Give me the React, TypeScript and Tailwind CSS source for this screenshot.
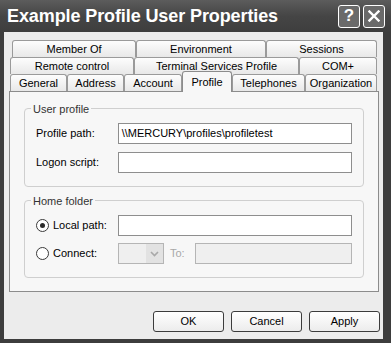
import type { ReactNode } from 'react';

const font = { fontFamily: '"Liberation Sans", Arial, sans-serif' };

function Tab({ label, width, active = false }: { label: string; width: number; active?: boolean }) {
  if (active) {
    return (
      <div
        className="relative z-10 -mt-[3px] -mb-px flex h-[21px] items-start justify-center rounded-t-[3px] border border-b-0 border-[#8c8c8c] bg-[#f7f7f7] pt-[2px] text-[11px] text-black"
        style={{ width }}
      >
        {label}
      </div>
    );
  }
  return (
    <div
      className="flex h-[17px] items-center justify-center rounded-t-[3px] border border-b-0 border-[#9a9a9a] bg-gradient-to-b from-[#fdfdfd] to-[#e8e8e8] text-[11px] text-black"
      style={{ width }}
    >
      {label}
    </div>
  );
}

function GroupBox({ title, children }: { title: string; children: ReactNode }) {
  return (
    <div className="relative rounded-[4px] border border-[#cfcfcf] px-[11px] pb-[13px] pt-[14px]">
      <span className="absolute -top-[8px] left-[6px] bg-[#f7f7f7] px-[2px] text-[11px] text-[#333]">{title}</span>
      {children}
    </div>
  );
}

function TextBox({ value = '', disabled = false, className = '' }: { value?: string; disabled?: boolean; className?: string }) {
  return (
    <div
      className={`flex h-[21px] items-center border px-[3px] text-[11px] text-black ${
        disabled ? 'border-[#b5b5b5] bg-[#efefef]' : 'border-[#8e8e8e] bg-white'
      } ${className}`}
    >
      {value}
    </div>
  );
}

function Radio({ checked = false }: { checked?: boolean }) {
  return (
    <span className="flex h-[13px] w-[13px] items-center justify-center rounded-full border border-[#3a3a3a] bg-white">
      {checked ? <span className="h-[5px] w-[5px] rounded-full bg-[#2a2a2a]" /> : null}
    </span>
  );
}

function Button({ label }: { label: string }) {
  return (
    <div className="flex h-[21px] w-[71px] items-center justify-center rounded-[3px] border border-[#3c3c3c] bg-gradient-to-b from-white to-[#ececec] text-[11px] text-black">
      {label}
    </div>
  );
}

export default function App() {
  return (
    <div className="flex h-[343px] w-[391px] flex-col bg-[#3d3d3d]" style={font}>
      <div className="flex h-[32px] items-center justify-between bg-gradient-to-b from-[#5c5c5c] via-[#454545] to-[#3e3e3e] pl-[7px] pr-[6px]">
        <span className="text-[18px] font-bold tracking-[-0.1px] text-white">Example Profile User Properties</span>
        <div className="flex gap-[3px]">
          <div className="flex h-[23px] w-[22px] items-center justify-center rounded-[3px] border border-white bg-[#6a6a6a] text-[17px] font-bold text-white">
            ?
          </div>
          <div className="flex h-[23px] w-[22px] items-center justify-center rounded-[3px] border border-white bg-[#6a6a6a]">
            <svg width="12" height="12" viewBox="0 0 12 12">
              <path d="M1.5 1.5 L10.5 10.5 M10.5 1.5 L1.5 10.5" stroke="white" strokeWidth="2.4" strokeLinecap="square" />
            </svg>
          </div>
        </div>
      </div>

      <div className="mb-[4px] ml-[4px] mr-[8px] flex flex-1 flex-col bg-[#ececec] pt-[8px]">
        <div className="flex flex-col pl-[6px]">
          <div className="flex pl-[2px]">
            <Tab label="Member Of" width={124} />
            <Tab label="Environment" width={130} />
            <Tab label="Sessions" width={111} />
          </div>
          <div className="flex">
            <Tab label="Remote control" width={124} />
            <Tab label="Terminal Services Profile" width={165} />
            <Tab label="COM+" width={78} />
          </div>
          <div className="flex items-end">
            <Tab label="General" width={57} />
            <Tab label="Address" width={57} />
            <Tab label="Account" width={58} />
            <Tab label="Profile" width={50} active />
            <Tab label="Telephones" width={73} />
            <Tab label="Organization" width={72} />
          </div>
        </div>

        <div className="ml-[5px] mr-[4px] flex h-[201px] flex-col gap-[13px] border border-[#8c8c8c] bg-[#f7f7f7] px-[14px] pt-[16px]">
          <GroupBox title="User profile">
            <div className="flex flex-col gap-[8px]">
              <div className="flex items-center">
                <span className="w-[83px] text-[11px] text-black">Profile path:</span>
                <TextBox value="\\MERCURY\profiles\profiletest" className="w-[238px]" />
              </div>
              <div className="flex items-center">
                <span className="w-[83px] text-[11px] text-black">Logon script:</span>
                <TextBox className="w-[238px]" />
              </div>
            </div>
          </GroupBox>

          <GroupBox title="Home folder">
            <div className="flex flex-col gap-[7px]">
              <div className="flex items-center">
                <span className="flex w-[83px] items-center gap-[4px] text-[11px] text-black">
                  <Radio checked />
                  Local path:
                </span>
                <TextBox className="w-[238px]" />
              </div>
              <div className="flex items-center">
                <span className="flex w-[83px] items-center gap-[4px] text-[11px] text-black">
                  <Radio />
                  Connect:
                </span>
                <div className="flex h-[21px] w-[47px] border border-[#b5b5b5] bg-[#efefef]">
                  <div className="flex-1" />
                  <div className="flex w-[17px] items-center justify-center bg-[#e2e2e2]">
                    <svg width="9" height="6" viewBox="0 0 9 6">
                      <path d="M1 1 L4.5 4.5 L8 1" fill="none" stroke="#a8a8a8" strokeWidth="1.6" />
                    </svg>
                  </div>
                </div>
                <span className="ml-[6px] w-[25px] text-[11px] text-[#a8a8a8]">To:</span>
                <TextBox disabled className="w-[160px]" />
              </div>
            </div>
          </GroupBox>
        </div>

        <div className="mt-[19px] mr-[3px] flex justify-end gap-[7px]">
          <Button label="OK" />
          <Button label="Cancel" />
          <Button label="Apply" />
        </div>
      </div>
    </div>
  );
}
